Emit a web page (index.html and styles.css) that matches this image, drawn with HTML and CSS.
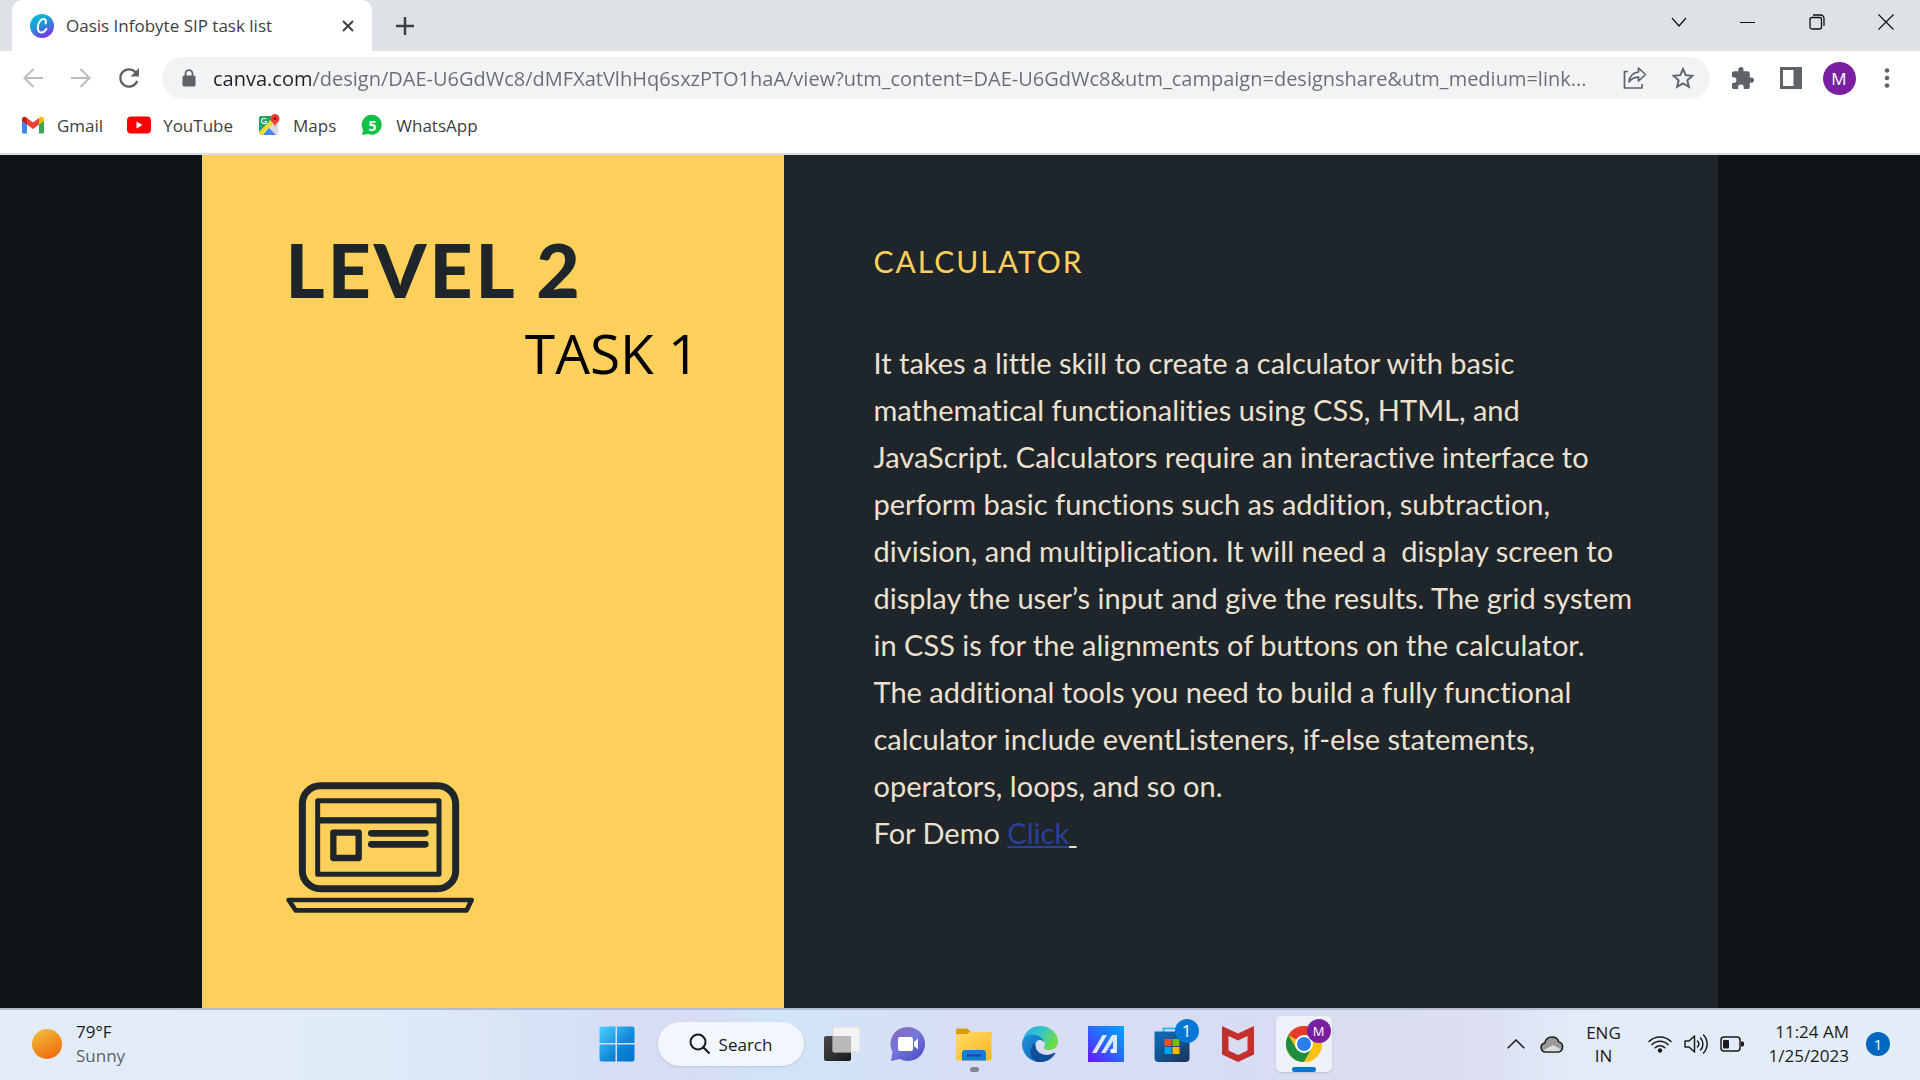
FILE: index.html
```
<!DOCTYPE html>
<html lang="en">
<head>
<meta charset="utf-8">
<title>Oasis Infobyte SIP task list</title>
<link rel="stylesheet" href="styles.css">
</head>
<body>
<div class="screen">
  <header class="browser">
    <div class="tabstrip">
      <div class="tab">
        <svg class="favicon" viewBox="0 0 24 24" width="24" height="24"><defs><linearGradient id="cv" x1="0.2" y1="0" x2="0.7" y2="1"><stop offset="0" stop-color="#00c4cc"/><stop offset="0.5" stop-color="#2b8fd8"/><stop offset="1" stop-color="#7d2ae8"/></linearGradient></defs><circle cx="12" cy="12" r="12" fill="url(#cv)"/><path d="M15.500 9.500c1-2 .5-4.500-1.800-4.500C10.500 5 7.800 9.500 7.800 13.800c0 3 1.400 4.700 3.500 4.700 2.300 0 4-1.600 5.200-3.700" fill="none" stroke="#fff" stroke-width="1.900" stroke-linecap="round"/></svg>
        <span class="tab-title">Oasis Infobyte SIP task list</span>
        <button class="tab-close" aria-label="Close tab"><svg width="12" height="12" viewBox="0 0 12 12"><path d="M1 1l10 10M11 1L1 11" stroke="#3c4043" stroke-width="2"/></svg></button>
      </div>
      <button class="new-tab" aria-label="New tab"><svg width="18" height="18" viewBox="0 0 18 18"><path d="M9 0v18M0 9h18" stroke="#3c4043" stroke-width="2.500"/></svg></button>
      <div class="window-controls">
        <button aria-label="Search tabs"><svg width="16" height="10" viewBox="0 0 16 10"><path d="M1 1l7 8 7-8" fill="none" stroke="#111" stroke-width="1.200"/></svg></button>
        <button aria-label="Minimize"><svg width="16" height="16" viewBox="0 0 16 16"><path d="M0 8.500h15" stroke="#111"/></svg></button>
        <button aria-label="Restore"><svg width="16" height="16" viewBox="0 0 16 16"><rect x="1" y="3.500" width="11.500" height="11.500" rx="2" fill="none" stroke="#111" stroke-width="1.300"/><path d="M4 1h7.500a3.500 3.500 0 0 1 3.500 3.500v7.500" fill="none" stroke="#111" stroke-width="1.300"/></svg></button>
        <button aria-label="Close"><svg width="16" height="16" viewBox="0 0 16 16"><path d="M.5.5l15 15M15.500.5l-15 15" stroke="#111" stroke-width="1.200"/></svg></button>
      </div>
    </div>
    <div class="toolbar">
      <button class="tool" aria-label="Back"><svg width="20" height="20" viewBox="0 0 20 20"><path d="M20 10H2M10.500 1L1.500 10l9 9" fill="none" stroke="#bbbcbe" stroke-width="2"/></svg></button>
      <button class="tool" aria-label="Forward"><svg width="20" height="20" viewBox="0 0 20 20"><path d="M0 10h18M9.500 1l9 9-9 9" fill="none" stroke="#bbbcbe" stroke-width="2"/></svg></button>
      <button class="tool" aria-label="Reload"><svg width="22" height="22" viewBox="0 0 22 22"><path d="M17.800 5.500A8.700 8.700 0 1 0 19.200 14" fill="none" stroke="#5f6368" stroke-width="2.300"/><path d="M21 1v8.500h-8.500z" fill="#5f6368"/></svg></button>
      <div class="omnibox">
        <svg width="14" height="18" viewBox="0 0 14 18"><path d="M3.500 8V4.700a3.500 3.500 0 0 1 7 0V8" fill="none" stroke="#5f6368" stroke-width="1.800"/><rect x="0.500" y="6.500" width="13" height="11" rx="1.500" fill="#5f6368"/></svg>
        <input class="url" type="text" aria-label="Address" value="canva.com/design/DAE-U6GdWc8/dMFXatVlhHq6sxzPTO1haA/view?utm_content=DAE-U6GdWc8&amp;utm_campaign=designshare&amp;utm_medium=link...">
        <button class="tool" aria-label="Share"><svg width="24" height="24" viewBox="0 0 24 24"><path d="M5 5.500H1.500v16.500H19V18" fill="none" stroke="#5f6368" stroke-width="1.700"/><path d="M15.500 2l7 6.500-7 6.500v-3.800c-4.500 0-7 1.500-9.500 4.800 .5-5.300 3-9.300 9.500-10z" fill="none" stroke="#5f6368" stroke-width="1.700" stroke-linejoin="round"/></svg></button>
        <button class="tool" aria-label="Bookmark"><svg width="22" height="22" viewBox="0 0 22 22"><path d="M11 2l2.700 6.200 6.800.6-5.200 4.500 1.600 6.600L11 16.400l-5.900 3.500 1.600-6.600L1.500 8.800l6.800-.6z" fill="none" stroke="#5f6368" stroke-width="1.900"/></svg></button>
      </div>
      <button class="tool" aria-label="Extensions"><svg width="22" height="22" viewBox="2 1 21 21"><path d="M20.500 11H19V7c0-1.100-.9-2-2-2h-4V3.500a2.500 2.500 0 0 0-5 0V5H4c-1.100 0-2 .9-2 2v3.800h1.500a2.700 2.700 0 0 1 0 5.400H2V20c0 1.100.9 2 2 2h3.800v-1.500a2.700 2.700 0 0 1 5.400 0V22H17c1.100 0 2-.9 2-2v-4h1.500a2.500 2.500 0 0 0 0-5z" fill="#5f6368"/></svg></button>
      <button class="tool" aria-label="Side panel"><svg width="22" height="22" viewBox="0 0 22 22"><path d="M0 0h22v22H0zM3 3v16h10.500V3z" fill="#5f6368" fill-rule="evenodd"/></svg></button>
      <button class="tool" aria-label="Profile"><span class="avatar">M</span></button>
      <button class="tool" aria-label="Menu"><svg width="6" height="20" viewBox="0 0 6 20"><g fill="#5f6368"><circle cx="3" cy="2.500" r="2.300"/><circle cx="3" cy="10" r="2.300"/><circle cx="3" cy="17.500" r="2.300"/></g></svg></button>
    </div>
    <nav class="bookmarks">
      <a href="#"><svg width="24" height="18" viewBox="0 0 24 18"><path d="M1 3v13a1.500 1.500 0 0 0 1.500 1.500H6V8z" fill="#4285f4"/><path d="M23 3v13a1.500 1.500 0 0 1-1.500 1.500H18V8z" fill="#34a853"/><path d="M6 8.500V2l6 4.500L18 2v6.500L12 13z" fill="#ea4335"/><path d="M1 3.500C1 .8 3.500.2 5 1.200L6 2v6.500L1 5z" fill="#c5221f"/><path d="M23 3.500c0-2.700-2.500-3.300-4-2.300L18 2v6.500L23 5z" fill="#fbbc04"/></svg>Gmail</a>
      <a href="#"><svg width="24" height="18" viewBox="0 0 24 18"><rect width="24" height="17" y="0.500" rx="4" fill="#f00"/><path d="M9.500 5.500v7l6-3.500z" fill="#fff"/></svg>YouTube</a>
      <a href="#"><svg width="24" height="24" viewBox="0 0 24 24"><rect x="2" y="3" width="19" height="19" rx="2" fill="#dadce0"/><path d="M2 20V5a2 2 0 0 1 2-2h13L2 20z" fill="#1fa463"/><path d="M2 19L16 5l3 3L5 22H4a2 2 0 0 1-2-2z" fill="#fdd835"/><path d="M6 22l6-7 7 7z" fill="#4285f4"/><path d="M10 8.500H7.500M9.700 9a2.700 2.700 0 1 1-.6-3" fill="none" stroke="#fff" stroke-width="1.200"/><path d="M18 14c-.5-4-4.500-4.500-4.500-8.500a4.500 4.500 0 0 1 9 0c0 4-4 4.500-4.500 8.500z" fill="#ea4335"/><circle cx="18" cy="5.500" r="1.700" fill="#8e1b14"/></svg>Maps</a>
      <a href="#"><svg width="24" height="22" viewBox="0 0 24 22"><path d="M2 21l1.200-5A10 10 0 1 1 8 20z" fill="#10c144"/><text x="12.500" y="16.500" class="wa-count">5</text></svg>WhatsApp</a>
    </nav>
  </header>

  <main class="stage">
    <article class="slide">
      <section class="slide-left">
        <h1>LEVEL 2</h1>
        <p class="task">TASK 1</p>
        <svg class="laptop" width="190" height="132" viewBox="78 65 570 396"><g fill="none" stroke="#1e252b"><rect x="127" y="76" width="460" height="309" rx="54" stroke-width="21"/><path d="M173 121h364v221H173zM173 180h364" stroke-width="15" stroke-linejoin="round"/><path d="M173 180h364" stroke-width="19"/><path d="M220 217h76v76h-76z" stroke-width="19" stroke-linejoin="round"/><path d="M334 219h162M334 252h162" stroke-width="20" stroke-linecap="round"/><path d="M86 419h549l-15 31H107z" stroke-width="14" stroke-linejoin="round"/></g></svg>
      </section>
      <section class="slide-right">
        <h2>CALCULATOR</h2>
        <p class="body">It takes a little skill to create a calculator with basic<br>mathematical functionalities using CSS, HTML, and<br>JavaScript. Calculators require an interactive interface to<br>perform basic functions such as addition, subtraction,<br>division, and multiplication. It will need a&nbsp; display screen to<br>display the user’s input and give the results. The grid system<br>in CSS is for the alignments of buttons on the calculator.<br>The additional tools you need to build a fully functional<br>calculator include eventListeners, if-else statements,<br>operators, loops, and so on.<br>For Demo <a href="#">Click</a><u>&nbsp;</u></p>
      </section>
    </article>
  </main>

  <footer class="taskbar">
    <button class="weather"><svg width="30" height="30" viewBox="0 0 30 30"><defs><linearGradient id="sun" x1="0.2" y1="0" x2="0.7" y2="1"><stop offset="0" stop-color="#f0bc38"/><stop offset="1" stop-color="#f06a0c"/></linearGradient></defs><circle cx="15" cy="15" r="15" fill="url(#sun)"/></svg><span class="two-line">79°F<br><span class="muted">Sunny</span></span></button>
    <div class="apps">
      <button class="app" aria-label="Start"><svg width="36" height="36" viewBox="0 0 36 36"><defs><linearGradient id="win" x1="0" y1="0" x2="1" y2="1"><stop offset="0" stop-color="#4cd0ff"/><stop offset="0.600" stop-color="#0f86d8"/><stop offset="1" stop-color="#0070cc"/></linearGradient></defs><path d="M2 .5h14.500v16.500H.5V2zM18 .5h16l1.500 1.500v15H18zM.5 18.500h16v17H2l-1.500-1.500zM18 18.500h17.500V34L34 35.500H18z" fill="url(#win)"/></svg></button>
      <button class="search"><svg width="22" height="22" viewBox="0 0 22 22"><circle cx="9" cy="9" r="7.500" fill="none" stroke="#1b1b1b" stroke-width="2"/><path d="M14.500 14.500l6 6" stroke="#1b1b1b" stroke-width="2.200"/></svg>Search</button>
      <button class="app" aria-label="Task view"><svg width="38" height="36" viewBox="0 0 38 36"><defs><linearGradient id="tv" x1="0" y1="0" x2="1" y2="1"><stop offset="0" stop-color="#4a4a4a"/><stop offset="1" stop-color="#1a1a1a"/></linearGradient></defs><rect x="1" y="10" width="27" height="25" rx="2" fill="url(#tv)"/><rect x="10" y="1" width="27" height="25" rx="1" fill="#f3f3f3" stroke="#ddd"/><path d="M10 10h18v16H10z" fill="#b9b9b9"/></svg></button>
      <button class="app" aria-label="Chat"><svg width="36" height="36" viewBox="0 0 36 36"><defs><linearGradient id="ch" x1="0.100" y1="0.100" x2="0.700" y2="0.900"><stop offset="0" stop-color="#8a68bb"/><stop offset="0.500" stop-color="#7378dc"/><stop offset="1" stop-color="#5558c8"/></linearGradient></defs><path d="M18 1a17 17 0 1 1-8 32L1 35l1.500-9A17 17 0 0 1 18 1z" fill="url(#ch)"/><rect x="8" y="11" width="15" height="14" rx="2" fill="#fff"/><path d="M24 16l4-3.500v11L24 20z" fill="#fff"/></svg></button>
      <button class="app running" aria-label="File Explorer"><svg width="38" height="34" viewBox="0 0 38 34"><defs><linearGradient id="fo" x1="0" y1="0" x2="1" y2="1"><stop offset="0" stop-color="#ffdc68"/><stop offset="1" stop-color="#f9b41c"/></linearGradient></defs><path d="M1 7V3a1.500 1.500 0 0 1 1.500-1.500H12l4 3.500h20l1 2z" fill="#dc9a06"/><path d="M1 7h11l3-2h20a1.500 1.500 0 0 1 1.500 1.500V32a1.500 1.500 0 0 1-1.500 1.500H2.500A1.500 1.500 0 0 1 1 32z" fill="url(#fo)"/><path d="M7 33.500V26a3 3 0 0 1 3-3h18a3 3 0 0 1 3 3v7.500z" fill="#0f7fd4"/><path d="M12 28.500h14" stroke="#0a4f8e" stroke-width="2"/></svg></button>
      <button class="app" aria-label="Edge"><svg width="36" height="36" viewBox="0 0 36 36"><defs><linearGradient id="e1" x1="0" y1="0" x2="1" y2="0.400"><stop offset="0" stop-color="#2aa9e6"/><stop offset="0.550" stop-color="#35c6c6"/><stop offset="1" stop-color="#6ddc4a"/></linearGradient><linearGradient id="e2" x1="0" y1="0" x2="1" y2="1"><stop offset="0" stop-color="#2093dc"/><stop offset="1" stop-color="#0b5fb4"/></linearGradient></defs><path d="M1 14C3 5 10 0 18 0c11 0 18 8 18 15 0 6-4 9-9 9-4 0-6-1.500-5-3 2-2.500 1-8-5-8C9 13 5 12 1 14z" fill="url(#e1)"/><path d="M0 18c0-6 5-9.500 10-9.500 6 0 11 3.500 12 8-2-4.500-9-3-9 3C13 27 19 32 25 32c-2 2-4 4-7 4C8 36 0 28 0 18z" fill="url(#e2)"/><path d="M13.500 17c-1 8 5 12 12 12 4 0 7-3 8-2-2 4-7 9-15 9-7 0-10-5-10-10 0-4 2-8 5-9z" fill="#0f4f9a"/></svg></button>
      <button class="app" aria-label="MyASUS"><svg width="36" height="36" viewBox="0 0 36 36"><defs><linearGradient id="ma" x1="0" y1="1" x2="1" y2="0"><stop offset="0" stop-color="#6a10ff"/><stop offset="0.500" stop-color="#2868ff"/><stop offset="1" stop-color="#00a8ff"/></linearGradient></defs><path d="M0 0h36v36H0z" fill="url(#ma)"/><path d="M4 27L14.500 9H19L8.500 27zM13 27L24 9h5v18h-4V15l-7.500 12z" fill="#dce8ff"/><circle cx="24.500" cy="25" r="2.300" fill="#fff"/></svg></button>
      <button class="app" aria-label="Microsoft Store"><svg width="36" height="36" viewBox="0 0 36 36"><defs><linearGradient id="st" x1="0" y1="0" x2="1" y2="1"><stop offset="0" stop-color="#0a6fc2"/><stop offset="1" stop-color="#1d3357"/></linearGradient></defs><path d="M9.500 8V2.500h17V8" fill="none" stroke="#33b8e8" stroke-width="2"/><path d="M.5 5.500h35V32a4 4 0 0 1-4 4h-27a4 4 0 0 1-4-4z" fill="url(#st)"/><path d="M10.500 13h7v7h-7z" fill="#f25022"/><path d="M18.500 13h7v7h-7z" fill="#7fba00"/><path d="M10.500 21h7v7h-7z" fill="#00a4ef"/><path d="M18.500 21h7v7h-7z" fill="#ffb900"/></svg><span class="badge">1</span></button>
      <button class="app" aria-label="McAfee"><svg width="34" height="36" viewBox="0 0 34 36"><path d="M1 0l16 7.500L33 0v28.500L17 36 1 28.500zM7.500 10v14.500l9.500 4.500 9.500-4.500V10L17 14.500z" fill="#c4302b" fill-rule="evenodd"/></svg></button>
      <button class="app active" aria-label="Chrome"><svg width="36" height="36" viewBox="0 0 36 36"><circle cx="18" cy="18" r="18" fill="#fbc116"/><path d="M18 18L2.400 9A18 18 0 0 1 33.600 9H18z" fill="#e33b2e"/><path d="M2.400 9l7.800 13.500L18 27l0 9A18 18 0 0 1 2.400 9z" fill="#1e8e3e"/><path d="M10.200 22.500L18 27l7.800-4.500L18 36z" fill="#1e8e3e"/><path d="M25.800 22.500L18 36A18 18 0 0 0 33.600 9H18z" fill="#fbc116"/><circle cx="18" cy="18" r="9" fill="#fff"/><circle cx="18" cy="18" r="7" fill="#2b7de9"/></svg><span class="badge badge-profile">M</span></button>
    </div>
    <div class="tray">
      <button aria-label="Show hidden icons"><svg width="18" height="10" viewBox="0 0 18 10"><path d="M.7 9.300L9 1l8.300 8.300" fill="none" stroke="#1b1b1b" stroke-width="1.500"/></svg></button>
      <button class="cloud" aria-label="OneDrive"><svg width="24" height="17" viewBox="0 0 24 17"><path d="M5.500 16a4.500 4.500 0 0 1-.8-8.900C5.500 3.500 8.500 1 12 1c3.200 0 5.800 1.900 6.800 4.900A5.200 5.200 0 0 1 18.500 16z" fill="#9a9a9a" stroke="#1b1b1b" stroke-width="1.500"/><path d="M3 14.500L13 9l8 4.500a4 4 0 0 1-2.500 1.700h-13z" fill="#dcdcdc"/></svg></button>
      <button class="lang">ENG<br>IN</button>
      <button class="quick" aria-label="Network, volume and battery"><svg width="24" height="18" viewBox="0 0 24 18"><g fill="none" stroke="#1b1b1b" stroke-width="1.500" stroke-linecap="round"><path d="M1 6.500a15.500 15.500 0 0 1 22 0M4 9.700a11.200 11.200 0 0 1 16 0M7.200 12.800a6.800 6.800 0 0 1 9.600 0"/></g><circle cx="12" cy="15.500" r="2.200" fill="#1b1b1b"/></svg><svg width="24" height="20" viewBox="0 0 24 20"><path d="M1 7v6h4l5.500 5V2L5 7z" fill="none" stroke="#1b1b1b" stroke-width="1.500" stroke-linejoin="round"/><path d="M13.500 7a4.500 4.500 0 0 1 0 6M16.500 4a8.500 8.500 0 0 1 0 12M19.500 1a13 13 0 0 1 0 18" fill="none" stroke="#1b1b1b" stroke-width="1.500" stroke-linecap="round"/></svg><svg width="24" height="16" viewBox="0 0 24 16"><rect x="1" y="1" width="19" height="14" rx="3" fill="none" stroke="#1b1b1b" stroke-width="1.500"/><rect x="3" y="4" width="6" height="8.500" rx="1" fill="#1b1b1b"/><path d="M21 5.500h1.500a1.500 1.500 0 0 1 1.500 1.500v2a1.500 1.500 0 0 1-1.500 1.500H21z" fill="#1b1b1b"/></svg></button>
      <button class="clock">11:24 AM<br>1/25/2023</button>
      <button class="notify" aria-label="1 notification">1</button>
    </div>
  </footer>
</div>
</body>
</html>
```
FILE: styles.css
```
* { box-sizing: border-box; margin: 0; padding: 0; }
body { font-family: "Open Sans", "Noto Sans", sans-serif; font-size: 17px; color: #3c4043; }
button { border: 0; background: none; font: inherit; color: inherit; }
svg { display: block; flex: none; }
.screen { display: flex; flex-direction: column; min-height: 100vh; }

/* Browser frame */
.browser { background: #fff; border-bottom: 2px solid #dadcde; }
.tabstrip { display: flex; height: 51px; padding-left: 12px; background: #dee1e6; }
.tab { display: flex; align-items: center; width: 360px; padding: 0 18px; background: #fff; border-radius: 10px 10px 0 0; }
.tab-title { flex: 1; margin-left: 12px; white-space: nowrap; }
.new-tab { display: grid; place-items: center; width: 66px; }
.window-controls { display: flex; height: 44px; margin-left: auto; }
.window-controls button { display: grid; place-items: center; width: 69px; }
.toolbar { display: flex; align-items: center; height: 54px; padding: 0 9px; }
.tool { display: grid; place-items: center; width: 48px; height: 42px; flex: none; }
.omnibox { display: flex; align-items: center; flex: 1; min-width: 0; height: 42px; margin: 0 9px; padding: 0 3px 0 20px; border-radius: 21px; background: #f1f3f4; }
.url {
  flex: 1; min-width: 0; height: 42px; margin-left: 17px; border: 0; outline: 0;
  font: 20px "Open Sans", "Noto Sans", sans-serif;
  color: transparent; background: linear-gradient(90deg, #202124 98px, #6a6d71 98px);
  -webkit-background-clip: text; background-clip: text;
}
.avatar { display: grid; place-items: center; width: 33px; height: 33px; border-radius: 50%; background: #7b1fa2; color: #fff; font-size: 17px; }
.bookmarks { display: flex; align-items: center; gap: 24px; height: 48px; padding: 0 21px 8px; }
.bookmarks a { display: flex; align-items: center; gap: 12px; color: #3c4043; text-decoration: none; }
.wa-count { font: bold 14px "Open Sans", sans-serif; fill: #fff; text-anchor: middle; }

/* Slide */
.stage { display: flex; flex: 1; justify-content: center; background: #0e1316; }
.slide { display: grid; grid-template-columns: minmax(0, 582fr) minmax(0, 935fr); width: 79%; }
.slide-left { display: flex; flex-direction: column; padding: 70px 84px 94px; background: #fdd05b; }
.slide-left h1 { font: 900 75px/88px Lato, sans-serif; letter-spacing: 3px; color: #1e252b; white-space: nowrap; }
.task { align-self: flex-end; margin-top: 2px; font-size: 55px; line-height: 76px; color: #000; }
.laptop { margin-top: auto; }
.slide-right { padding: 84px 86px 40px 90px; background: #1e252b; }
.slide-right h2 { font: 400 30px/44px Lato, sans-serif; letter-spacing: 2px; color: #fdd05b; }
.body { margin-top: 56px; font: 29px/47px Lato, sans-serif; font-variant-ligatures: none; color: #ece0cf; white-space: nowrap; }
.body a { color: #2b4199; }

/* Taskbar */
.taskbar {
  display: grid; grid-template-columns: 1fr auto 1fr; align-items: center; height: 72px; padding-bottom: 2px;
  border-top: 2px solid #b3bcca; color: #1b1b1b;
  background: linear-gradient(90deg, #e2edf8 0%, #e0ebf8 20%, #d5dff6 31%, #d8dcf2 36%, #d1e4f8 40%, #d6def5 50%, #d8dcf3 65%, #dcdff1 77%, #e1ecf8 82%, #e2edf8 100%);
}
.weather { display: flex; gap: 14px; align-items: center; margin-left: 32px; text-align: left; justify-self: start; }
.two-line { line-height: 24px; }
.muted { color: #5d6268; }
.apps { display: flex; align-items: center; gap: 10px; }
.app { position: relative; display: grid; place-items: center; width: 56px; height: 56px; border-radius: 5px; }
.search { display: flex; align-items: center; justify-content: center; gap: 8px; width: 146px; height: 44px; margin-left: 3px; border-radius: 22px; background: #f2f6fd; box-shadow: 0 1px 2px #b9c4dd; font-size: 17px; }
.active { background: #ecf1fa; box-shadow: 0 1px 2px #b9c0d2; }
.running::after, .active::after { content: ""; position: absolute; bottom: 0; left: 50%; width: 24px; height: 5px; margin-left: -12px; border-radius: 3px; background: #0078d4; }
.running::after { width: 9px; margin-left: -4px; background: #82868f; }
.badge { position: absolute; top: 3px; right: 1px; display: grid; place-items: center; width: 24px; height: 24px; border-radius: 50%; background: #0078d4; color: #fff; font-size: 17px; line-height: 24px; }
.badge-profile { background: #7b1fa2; font-size: 13px; }
.tray { display: flex; align-items: center; justify-content: flex-end; padding-right: 30px; }
.cloud { margin-left: 15px; }
.lang { width: 60px; margin-left: 9px; line-height: 23px; text-align: center; }
.quick { display: flex; align-items: center; gap: 12px; margin-left: 15px; }
.clock { margin-left: 24px; line-height: 24px; text-align: right; white-space: nowrap; }
.notify { width: 24px; height: 24px; margin-left: 17px; border-radius: 50%; background: #0067c0; color: #fff; font-size: 15px; line-height: 24px; }
```
